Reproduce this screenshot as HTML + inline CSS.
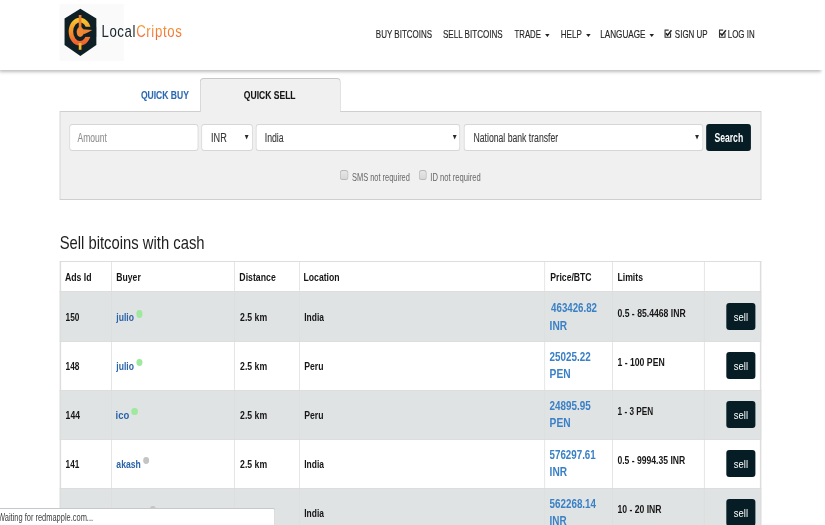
<!DOCTYPE html>
<html><head><meta charset="utf-8"><style>
html,body{margin:0;padding:0;background:#fff;overflow:hidden;width:825px;height:525px}
#pg{position:absolute;left:0;top:0;width:1106.34px;height:525px;transform:scaleX(0.7457);transform-origin:0 0;font-family:"Liberation Sans",sans-serif;overflow:hidden}
.t{position:absolute;white-space:nowrap;line-height:1;transform-origin:0 50%}
</style></head><body><div id="pg">
<div style="position:absolute;left:-1px;top:62px;width:1101.98px;height:8px;box-shadow:0 2px 4px rgba(0,0,0,.26);z-index:2"></div>
<div style="position:absolute;left:0;top:0;width:1106.34px;height:70px;background:#fff;z-index:2"></div>
<div style="position:absolute;left:80.46px;top:4px;width:85.83px;height:57px;background:#fafafa;z-index:3"></div>
<svg style="position:absolute;left:80.46px;top:4px;z-index:4" width="85.83" height="57" viewBox="60 4 64 57" preserveAspectRatio="none">
<defs><linearGradient id="lg" x1="0" y1="0" x2="0" y2="1"><stop offset="0" stop-color="#f9c42a"/><stop offset="1" stop-color="#f0602f"/></linearGradient></defs>
<polygon points="80.7,8.7 96.7,18.6 96.7,45 80.7,55.9 64.9,45 64.9,18.6" fill="#0e1f26"/>
<ellipse cx="80.25" cy="31.6" rx="9" ry="11.65" fill="none" stroke="url(#lg)" stroke-width="4.5"/>
<rect x="84.5" y="26.8" width="12" height="10.1" fill="#0e1f26"/>
<rect x="79.1" y="15" width="2.7" height="14" fill="#ef7f30"/>
<rect x="79.1" y="43" width="2.7" height="6.8" fill="#f6b82b"/>
<ellipse cx="80.5" cy="32" rx="3.5" ry="4.9" fill="#f08932"/>
<path d="M83 29.3 L92.6 30.1 Q89 32.6 83.6 34.4 Z" fill="#f0842f"/>
</svg>
<div class="t" id="logo" style="left:136.38px;top:22.51px;font-size:17px;color:#18262d;font-weight:400;transform:scaleX(1.0435);z-index:4;letter-spacing:0.8px"><span style="color:#18262d">Local</span><span style="background:linear-gradient(#f7a52a,#f15d3a);-webkit-background-clip:text;background-clip:text;color:transparent">Criptos</span></div>
<div class="t" id="t1" style="left:504.36px;top:28.66px;font-size:10.8px;color:#262626;font-weight:400;transform:scaleX(0.9933);z-index:4;-webkit-text-stroke:0.15px #262626">BUY BITCOINS</div>
<div class="t" id="t2" style="left:594.47px;top:28.66px;font-size:10.8px;color:#262626;font-weight:400;transform:scaleX(1.0018);z-index:4;-webkit-text-stroke:0.15px #262626">SELL BITCOINS</div>
<div class="t" id="t3" style="left:690.22px;top:28.66px;font-size:10.8px;color:#262626;font-weight:400;transform:scaleX(0.9651);z-index:4;-webkit-text-stroke:0.15px #262626">TRADE</div>
<div class="t" id="t4" style="left:751.64px;top:28.66px;font-size:10.8px;color:#262626;font-weight:400;transform:scaleX(0.9989);z-index:4;-webkit-text-stroke:0.15px #262626">HELP</div>
<div class="t" id="t5" style="left:804.61px;top:28.66px;font-size:10.8px;color:#262626;font-weight:400;transform:scaleX(1.0100);z-index:4;-webkit-text-stroke:0.15px #262626">LANGUAGE</div>
<div class="t" id="t6" style="left:904.65px;top:28.66px;font-size:10.8px;color:#262626;font-weight:400;transform:scaleX(0.9914);z-index:4;-webkit-text-stroke:0.15px #262626">SIGN UP</div>
<div class="t" id="t7" style="left:976.26px;top:28.66px;font-size:10.8px;color:#262626;font-weight:400;transform:scaleX(0.9815);z-index:4;-webkit-text-stroke:0.15px #262626">LOG IN</div>
<div style="position:absolute;left:731.13px;top:33.8px;width:0;height:0;border-left:3.08px solid transparent;border-right:3.08px solid transparent;border-top:3.1px solid #222;z-index:4"></div>
<div style="position:absolute;left:785.84px;top:33.8px;width:0;height:0;border-left:3.08px solid transparent;border-right:3.08px solid transparent;border-top:3.1px solid #222;z-index:4"></div>
<div style="position:absolute;left:870.99px;top:33.8px;width:0;height:0;border-left:3.08px solid transparent;border-right:3.08px solid transparent;border-top:3.1px solid #222;z-index:4"></div>
<svg style="position:absolute;left:889.90px;top:29px;z-index:4" width="12.07" height="9" viewBox="0 0 9 9" preserveAspectRatio="none"><path d="M6.9 4.2V8.3H1.4V1.1H5" fill="none" stroke="#333" stroke-width="1.1"/><path d="M2.2 4.2L3.9 6.3L7.8 1.3" fill="none" stroke="#222" stroke-width="1.5"/></svg>
<svg style="position:absolute;left:962.59px;top:29px;z-index:4" width="12.07" height="9" viewBox="0 0 9 9" preserveAspectRatio="none"><path d="M6.9 4.2V8.3H1.4V1.1H5" fill="none" stroke="#333" stroke-width="1.1"/><path d="M2.2 4.2L3.9 6.3L7.8 1.3" fill="none" stroke="#222" stroke-width="1.5"/></svg>
<div style="position:absolute;left:80.46px;top:111px;width:940.06px;height:89px;background:#f0f0f0;border:1px solid #cfcfcf;box-sizing:border-box"></div>
<div style="position:absolute;left:268.20px;top:78px;width:188.68px;height:34px;background:#f0f0f0;border:1.341px solid #c8c8c8;border-top-width:1px;border-bottom:0;box-sizing:border-box;border-radius:5.4px 5.4px 0 0/4px 4px 0 0;z-index:1"></div>
<div style="position:absolute;left:269.55px;top:110px;width:186.00px;height:3px;background:#f0f0f0;z-index:1"></div>
<div class="t" id="qbuy" style="left:189.35px;top:89.87px;font-size:11.5px;color:#2a69b0;font-weight:700;transform:scaleX(0.9960);-webkit-text-stroke:0.1px #2a69b0">QUICK BUY</div>
<div class="t" id="qsell" style="left:327.48px;top:89.87px;font-size:11.5px;color:#151515;font-weight:700;transform:scaleX(0.9963);z-index:2;-webkit-text-stroke:0.1px #151515">QUICK SELL</div>
<div style="position:absolute;left:93.20px;top:124px;width:173.13px;height:27px;background:#fff;border:1px solid #d6d6d6;border-left-width:1.341px;border-right-width:1.341px;box-sizing:border-box;border-radius:4.02px/3px"></div>
<div style="position:absolute;left:270.08px;top:124px;width:68.53px;height:27px;background:#fff;border:1px solid #d6d6d6;border-left-width:1.341px;border-right-width:1.341px;box-sizing:border-box;border-radius:4.02px/3px"></div>
<div style="position:absolute;left:342.63px;top:124px;width:274.24px;height:27px;background:#fff;border:1px solid #d6d6d6;border-left-width:1.341px;border-right-width:1.341px;box-sizing:border-box;border-radius:4.02px/3px"></div>
<div style="position:absolute;left:622.23px;top:124px;width:321.04px;height:27px;background:#fff;border:1px solid #d6d6d6;border-left-width:1.341px;border-right-width:1.341px;box-sizing:border-box;border-radius:4.02px/3px"></div>
<div style="position:absolute;left:947.43px;top:124px;width:59.68px;height:27px;background:#061d25;border-radius:4.02px/3px"></div>
<div class="t" id="amount" style="left:103.80px;top:131.64px;font-size:12px;color:#8f8f8f;font-weight:400;transform:scaleX(0.9521);-webkit-text-stroke:0.1px #8f8f8f">Amount</div>
<div class="t" id="inr" style="left:282.82px;top:131.64px;font-size:12px;color:#383838;font-weight:400;transform:scaleX(1.0171);-webkit-text-stroke:0.12px #383838">INR</div>
<div class="t" id="india" style="left:355.37px;top:131.64px;font-size:12px;color:#383838;font-weight:400;transform:scaleX(0.9758);-webkit-text-stroke:0.12px #383838">India</div>
<div class="t" id="nbt" style="left:634.57px;top:131.64px;font-size:12px;color:#383838;font-weight:400;transform:scaleX(0.9668);-webkit-text-stroke:0.12px #383838">National bank transfer</div>
<div class="t" id="search" style="left:958.03px;top:131.54px;font-size:12px;color:#fff;font-weight:700;transform:scaleX(0.9655);">Search</div>
<svg style="position:absolute;left:326.67px;top:134px" width="8.05" height="6" viewBox="0 0 6 6" preserveAspectRatio="none"><polygon points="0.9,0.9 4.7,0.9 2.8,5.4" fill="#2a2a2a"/></svg>
<svg style="position:absolute;left:606.41px;top:134px" width="8.05" height="6" viewBox="0 0 6 6" preserveAspectRatio="none"><polygon points="0.9,0.9 4.7,0.9 2.8,5.4" fill="#2a2a2a"/></svg>
<svg style="position:absolute;left:931.47px;top:134px" width="8.05" height="6" viewBox="0 0 6 6" preserveAspectRatio="none"><polygon points="0.9,0.9 4.7,0.9 2.8,5.4" fill="#2a2a2a"/></svg>
<div style="position:absolute;left:456.22px;top:170px;width:10.46px;height:10px;background:linear-gradient(#e6e6e6,#d8d8d8);border:1px solid #b8b8b8;border-left-width:1.341px;border-right-width:1.341px;box-sizing:border-box;border-radius:3.35px/2.5px"></div>
<div style="position:absolute;left:561.62px;top:170px;width:10.46px;height:10px;background:linear-gradient(#e6e6e6,#d8d8d8);border:1px solid #b8b8b8;border-left-width:1.341px;border-right-width:1.341px;box-sizing:border-box;border-radius:3.35px/2.5px"></div>
<div class="t" id="sms" style="left:472.44px;top:173.48px;font-size:10.3px;color:#666;font-weight:400;transform:scaleX(0.9696);">SMS not required</div>
<div class="t" id="idnr" style="left:577.18px;top:173.48px;font-size:10.3px;color:#666;font-weight:400;transform:scaleX(0.9921);">ID not required</div>
<div class="t" id="h2" style="left:80.19px;top:234.49px;font-size:18.2px;color:#1e1e1e;font-weight:400;transform:scaleX(1.0924);">Sell bitcoins with cash</div>
<div style="position:absolute;left:80.46px;top:291px;width:940.06px;height:50px;background:#e0e3e4"></div>
<div style="position:absolute;left:80.46px;top:291px;width:940.06px;height:1px;background:#dddddd"></div>
<div style="position:absolute;left:80.46px;top:341px;width:940.06px;height:49px;background:#ffffff"></div>
<div style="position:absolute;left:80.46px;top:341px;width:940.06px;height:1px;background:#dddddd"></div>
<div style="position:absolute;left:80.46px;top:390px;width:940.06px;height:49px;background:#e0e3e4"></div>
<div style="position:absolute;left:80.46px;top:390px;width:940.06px;height:1px;background:#dddddd"></div>
<div style="position:absolute;left:80.46px;top:439px;width:940.06px;height:49px;background:#ffffff"></div>
<div style="position:absolute;left:80.46px;top:439px;width:940.06px;height:1px;background:#dddddd"></div>
<div style="position:absolute;left:80.46px;top:488px;width:940.06px;height:37px;background:#e0e3e4"></div>
<div style="position:absolute;left:80.46px;top:488px;width:940.06px;height:1px;background:#dddddd"></div>
<div style="position:absolute;left:80.46px;top:261px;width:940.06px;height:1px;background:#dddddd"></div>
<div style="position:absolute;left:80.46px;top:261px;width:1.341px;height:264px;background:#dddddd"></div>
<div style="position:absolute;left:148.85px;top:261px;width:1.341px;height:264px;background:#dddddd"></div>
<div style="position:absolute;left:313.80px;top:261px;width:1.341px;height:264px;background:#dddddd"></div>
<div style="position:absolute;left:400.97px;top:261px;width:1.341px;height:264px;background:#dddddd"></div>
<div style="position:absolute;left:729.52px;top:261px;width:1.341px;height:264px;background:#dddddd"></div>
<div style="position:absolute;left:820.71px;top:261px;width:1.341px;height:264px;background:#dddddd"></div>
<div style="position:absolute;left:944.08px;top:261px;width:1.341px;height:264px;background:#dddddd"></div>
<div style="position:absolute;left:1019.18px;top:261px;width:1.341px;height:264px;background:#dddddd"></div>
<div class="t" id="t18" style="left:87.17px;top:271.73px;font-size:11.3px;color:#161616;font-weight:700;transform:scaleX(1.0365);">Ads Id</div>
<div class="t" id="t19" style="left:155.69px;top:271.73px;font-size:11.3px;color:#161616;font-weight:700;transform:scaleX(1.0226);">Buyer</div>
<div class="t" id="t20" style="left:320.50px;top:271.73px;font-size:11.3px;color:#161616;font-weight:700;transform:scaleX(1.0355);">Distance</div>
<div class="t" id="t21" style="left:407.13px;top:271.73px;font-size:11.3px;color:#161616;font-weight:700;transform:scaleX(1.0268);">Location</div>
<div class="t" id="t22" style="left:737.70px;top:271.73px;font-size:11.3px;color:#161616;font-weight:700;transform:scaleX(1.0237);">Price/BTC</div>
<div class="t" id="t23" style="left:827.81px;top:271.73px;font-size:11.3px;color:#161616;font-weight:700;transform:scaleX(1.0302);">Limits</div>
<div class="t" id="t24" style="left:87.97px;top:312.29px;font-size:11px;color:#161616;font-weight:700;transform:scaleX(1.0120);">150</div>
<div class="t" id="t25" style="left:156.09px;top:312.29px;font-size:11px;color:#2b63a8;font-weight:700;transform:scaleX(1.0433);">julio</div>
<div style="position:absolute;left:182.51px;top:310.4px;width:8.31px;height:7.2000000000000455px;background:#9ee99e;border-radius:50%"></div>
<div class="t" id="t26" style="left:321.58px;top:312.29px;font-size:11px;color:#161616;font-weight:700;transform:scaleX(1.0562);">2.5 km</div>
<div class="t" id="t27" style="left:407.54px;top:312.29px;font-size:11px;color:#161616;font-weight:700;transform:scaleX(1.0283);">India</div>
<div class="t" id="t28" style="left:738.50px;top:301.30px;font-size:13px;color:#3a80c6;font-weight:700;transform:scaleX(1.0023);">463426.82</div>
<div class="t" id="t29" style="left:737.16px;top:319.00px;font-size:13px;color:#3a80c6;font-weight:700;transform:scaleX(1.0461);">INR</div>
<div class="t" id="t30" style="left:827.68px;top:307.89px;font-size:11px;color:#161616;font-weight:700;transform:scaleX(1.0532);">0.5 - 85.4468 INR</div>
<div style="position:absolute;left:973.85px;top:302.7px;width:39.02px;height:27.30000000000001px;background:#061d25;border-radius:4.02px/3px"></div>
<div class="t" id="t31" style="left:984.31px;top:311.87px;font-size:11.5px;color:#fff;font-weight:400;transform:scaleX(1.1056);">sell</div>
<div class="t" id="t32" style="left:87.97px;top:360.54px;font-size:11px;color:#161616;font-weight:700;transform:scaleX(1.0120);">148</div>
<div class="t" id="t33" style="left:156.09px;top:360.54px;font-size:11px;color:#2b63a8;font-weight:700;transform:scaleX(1.0433);">julio</div>
<div style="position:absolute;left:182.51px;top:358.65px;width:8.31px;height:7.2000000000000455px;background:#9ee99e;border-radius:50%"></div>
<div class="t" id="t34" style="left:321.58px;top:360.54px;font-size:11px;color:#161616;font-weight:700;transform:scaleX(1.0562);">2.5 km</div>
<div class="t" id="t35" style="left:407.54px;top:360.54px;font-size:11px;color:#161616;font-weight:700;transform:scaleX(1.0557);">Peru</div>
<div class="t" id="t36" style="left:737.16px;top:349.55px;font-size:13px;color:#3a80c6;font-weight:700;transform:scaleX(1.0179);">25025.22</div>
<div class="t" id="t37" style="left:737.16px;top:367.25px;font-size:13px;color:#3a80c6;font-weight:700;transform:scaleX(1.0526);">PEN</div>
<div class="t" id="t38" style="left:827.68px;top:357.39px;font-size:11px;color:#161616;font-weight:700;transform:scaleX(1.0572);">1 - 100 PEN</div>
<div style="position:absolute;left:973.85px;top:352.2px;width:39.02px;height:27.30000000000001px;background:#061d25;border-radius:4.02px/3px"></div>
<div class="t" id="t39" style="left:984.31px;top:361.37px;font-size:11.5px;color:#fff;font-weight:400;transform:scaleX(1.1056);">sell</div>
<div class="t" id="t40" style="left:87.97px;top:409.54px;font-size:11px;color:#161616;font-weight:700;transform:scaleX(1.0438);">144</div>
<div class="t" id="t41" style="left:155.42px;top:409.54px;font-size:11px;color:#2b63a8;font-weight:700;transform:scaleX(1.1542);">ico</div>
<div style="position:absolute;left:176.34px;top:407.65px;width:8.31px;height:7.2000000000000455px;background:#9ee99e;border-radius:50%"></div>
<div class="t" id="t42" style="left:321.58px;top:409.54px;font-size:11px;color:#161616;font-weight:700;transform:scaleX(1.0562);">2.5 km</div>
<div class="t" id="t43" style="left:407.54px;top:409.54px;font-size:11px;color:#161616;font-weight:700;transform:scaleX(1.0557);">Peru</div>
<div class="t" id="t44" style="left:737.16px;top:398.55px;font-size:13px;color:#3a80c6;font-weight:700;transform:scaleX(1.0179);">24895.95</div>
<div class="t" id="t45" style="left:737.16px;top:416.25px;font-size:13px;color:#3a80c6;font-weight:700;transform:scaleX(1.0526);">PEN</div>
<div class="t" id="t46" style="left:828.22px;top:406.39px;font-size:11px;color:#161616;font-weight:700;">1 - 3 PEN</div>
<div style="position:absolute;left:973.85px;top:401.2px;width:39.02px;height:27.30000000000001px;background:#061d25;border-radius:4.02px/3px"></div>
<div class="t" id="t47" style="left:984.31px;top:410.37px;font-size:11.5px;color:#fff;font-weight:400;transform:scaleX(1.1056);">sell</div>
<div class="t" id="t48" style="left:87.97px;top:458.54px;font-size:11px;color:#161616;font-weight:700;transform:scaleX(1.0048);">141</div>
<div class="t" id="t49" style="left:156.09px;top:458.54px;font-size:11px;color:#2b63a8;font-weight:700;transform:scaleX(1.0532);">akash</div>
<div style="position:absolute;left:191.90px;top:456.65px;width:8.31px;height:7.2000000000000455px;background:#c4c4c4;border-radius:50%"></div>
<div class="t" id="t50" style="left:321.58px;top:458.54px;font-size:11px;color:#161616;font-weight:700;transform:scaleX(1.0562);">2.5 km</div>
<div class="t" id="t51" style="left:407.54px;top:458.54px;font-size:11px;color:#161616;font-weight:700;transform:scaleX(1.0283);">India</div>
<div class="t" id="t52" style="left:737.16px;top:447.55px;font-size:13px;color:#3a80c6;font-weight:700;transform:scaleX(1.0069);">576297.61</div>
<div class="t" id="t53" style="left:737.16px;top:465.25px;font-size:13px;color:#3a80c6;font-weight:700;transform:scaleX(1.0461);">INR</div>
<div class="t" id="t54" style="left:827.68px;top:455.39px;font-size:11px;color:#161616;font-weight:700;transform:scaleX(1.0471);">0.5 - 9994.35 INR</div>
<div style="position:absolute;left:973.85px;top:450.2px;width:39.02px;height:27.30000000000001px;background:#061d25;border-radius:4.02px/3px"></div>
<div class="t" id="t55" style="left:984.31px;top:459.37px;font-size:11.5px;color:#fff;font-weight:400;transform:scaleX(1.1056);">sell</div>
<div class="t" id="t56" style="left:88.24px;top:507.54px;font-size:11px;color:#161616;font-weight:700;">139</div>
<div class="t" id="t57" style="left:155.83px;top:507.54px;font-size:11px;color:#2b63a8;font-weight:700;">rajesh</div>
<div style="position:absolute;left:200.75px;top:505.65px;width:8.31px;height:7.2000000000000455px;background:#c4c4c4;border-radius:50%"></div>
<div class="t" id="t58" style="left:321.58px;top:507.54px;font-size:11px;color:#161616;font-weight:700;transform:scaleX(1.0562);">2.5 km</div>
<div class="t" id="t59" style="left:407.54px;top:507.54px;font-size:11px;color:#161616;font-weight:700;transform:scaleX(1.0283);">India</div>
<div class="t" id="t60" style="left:737.16px;top:496.55px;font-size:13px;color:#3a80c6;font-weight:700;transform:scaleX(1.0136);">562268.14</div>
<div class="t" id="t61" style="left:737.16px;top:514.25px;font-size:13px;color:#3a80c6;font-weight:700;transform:scaleX(1.0222);">INR</div>
<div class="t" id="t62" style="left:827.68px;top:504.39px;font-size:11px;color:#161616;font-weight:700;transform:scaleX(1.0517);">10 - 20 INR</div>
<div style="position:absolute;left:973.85px;top:499.2px;width:39.02px;height:27.30000000000001px;background:#061d25;border-radius:4.02px/3px"></div>
<div class="t" id="t63" style="left:984.31px;top:508.37px;font-size:11.5px;color:#fff;font-weight:400;transform:scaleX(1.1056);">sell</div>
<div style="position:absolute;left:0;top:508px;width:368.78px;height:17px;background:#fff;border-top:1px solid #c5c9cb;border-right:1.341px solid #c5c9cb;box-sizing:border-box;border-top-right-radius:2.7px 2px;z-index:10"></div>
<div class="t" id="status" style="left:-2.64px;top:513.33px;font-size:10px;color:#404040;font-weight:400;z-index:11">Waiting for redmapple.com...</div>
</div></body></html>
